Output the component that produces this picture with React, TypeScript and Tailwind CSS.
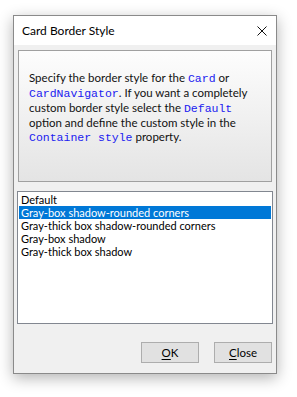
const items = [
  "Default",
  "Gray-box shadow-rounded corners",
  "Gray-thick box shadow-rounded corners",
  "Gray-box shadow",
  "Gray-thick box shadow",
];

const Code = ({ children }: { children: React.ReactNode }) => (
  <span className="font-['Liberation_Mono',monospace] text-[11.5px] leading-[14px] text-[#2020f0]">
    {children}
  </span>
);

const App = () => {
  return (
    <div className="h-[397px] w-[297px] bg-white pl-[13px] pt-[15px] font-['Lato',sans-serif] text-[11.5px] text-black">
      {/* window */}
      <div className="flex h-[359px] w-[264px] flex-col border border-[#8a8a8a] bg-[#f0f0f0] shadow-[0_4px_14px_rgba(0,0,0,0.3)]">
        {/* title bar */}
        <div className="flex h-[29px] items-center justify-between bg-white pl-[8px] pr-[9px]">
          <span className="text-[12px]">Card Border Style</span>
          <svg width="10" height="10" viewBox="0 0 10 10" className="mt-[1px]">
            <path d="M0.5 0.5 L9.5 9.5 M9.5 0.5 L0.5 9.5" stroke="#111" strokeWidth="1" />
          </svg>
        </div>

        {/* description */}
        <div className="mx-[4px] mt-[5px] h-[132px] border border-[#a0a0a0] bg-gradient-to-b from-[#fdfdfd] to-[#e4e4e4] px-[10px] pt-[20px] leading-[14px] text-[#111]">
          Specify the border style for the <Code>Card</Code> or{" "}
          <Code>CardNavigator</Code>. If you want a completely custom border
          style select the <Code>Default</Code> option and define the custom
          style in the <Code>Container style</Code> property.
        </div>

        {/* list */}
        <div className="mx-[3px] mt-[9px] h-[133px] border border-[#828790] bg-white px-[1px] pt-[1px] text-[11px]">
          {items.map((item, i) => (
            <div
              key={item}
              className={
                i === 1
                  ? "h-[13px] bg-[#0078d7] pl-[2px] leading-[13px] text-white"
                  : "h-[13px] pl-[2px] leading-[13px]"
              }
            >
              {item}
            </div>
          ))}
        </div>

        {/* buttons */}
        <div className="mt-[18px] flex justify-end gap-[15px] pr-[4px]">
          <button className="h-[21px] w-[58px] border border-[#adadad] bg-[#e1e1e1] text-[11.5px]">
            <span className="underline underline-offset-2">O</span>K
          </button>
          <button className="h-[21px] w-[58px] border border-[#adadad] bg-[#e1e1e1] text-[11.5px]">
            <span className="underline underline-offset-2">C</span>lose
          </button>
        </div>
      </div>
    </div>
  );
};

export default App;
